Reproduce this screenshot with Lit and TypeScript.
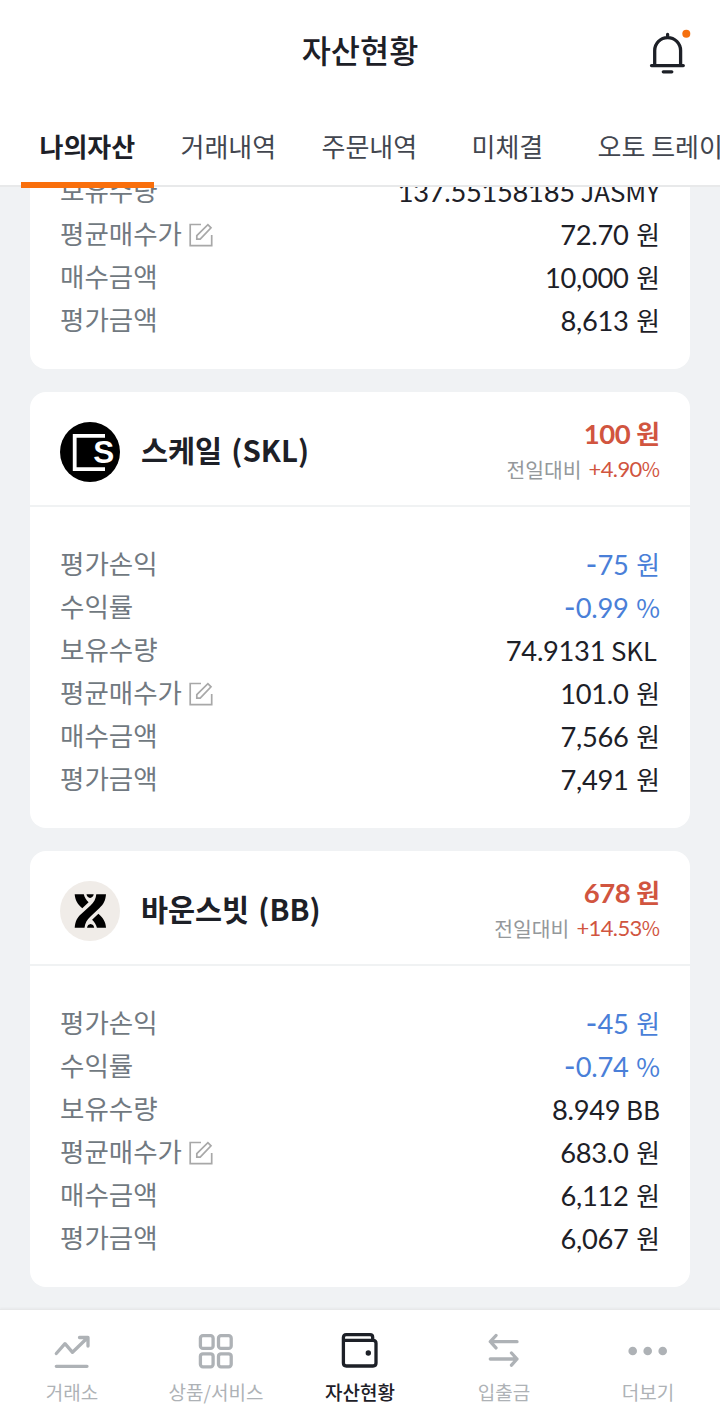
import { LitElement, html, css, svg } from "lit";
import { customElement, property } from "lit/decorators.js";

type Row = { label: string; value: string; edit?: boolean; down?: boolean; inset?: boolean };
type Asset = { name: string; logo: string; price: string; change: string; rows: Row[] };

const ASSETS: Asset[] = [
  {
    name: "스케일 (SKL)", logo: "skl", price: "100 원", change: "+4.90%",
    rows: [
      { label: "평가손익", value: "-75 원", down: true },
      { label: "수익률", value: "-0.99 %", down: true },
      { label: "보유수량", value: "74.9131 SKL", inset: true },
      { label: "평균매수가", value: "101.0 원", edit: true },
      { label: "매수금액", value: "7,566 원" },
      { label: "평가금액", value: "7,491 원" },
    ],
  },
  {
    name: "바운스빗 (BB)", logo: "bb", price: "678 원", change: "+14.53%",
    rows: [
      { label: "평가손익", value: "-45 원", down: true },
      { label: "수익률", value: "-0.74 %", down: true },
      { label: "보유수량", value: "8.949 BB" },
      { label: "평균매수가", value: "683.0 원", edit: true },
      { label: "매수금액", value: "6,112 원" },
      { label: "평가금액", value: "6,067 원" },
    ],
  },
];

const JASMY: Row[] = [
  { label: "보유수량", value: "137.55158185 JASMY" },
  { label: "평균매수가", value: "72.70 원", edit: true },
  { label: "매수금액", value: "10,000 원" },
  { label: "평가금액", value: "8,613 원" },
];

/* Numerals are set in Lato, units in the Korean family; the minus sign is a little wider. */
const figures = (text: string) =>
  (text.match(/-|[\d.,+]+|[^\d.,+-]+/g) ?? []).map((part) =>
    part === "-" ? html`<span class="minus">-</span>`
      : /\d/.test(part) ? html`<span class="num">${part}</span>` : part);

const LOGOS: Record<string, unknown> = {
  skl: svg`<circle cx="30" cy="30" r="30" fill="#000"/>
    <path d="M45 13.900H14.700V47.100H45" fill="none" stroke="#fff" stroke-width="3.800"/>
    <text x="33.200" y="41.300" font-family="Liberation Sans" font-weight="700" font-size="31" fill="#fff" textLength="21" lengthAdjust="spacingAndGlyphs">S</text>`,
  bb: svg`<circle cx="30" cy="30" r="30" fill="#f0ece8"/>
    <path d="M36.300 13.300H46C45.500 19.500 43.500 23.500 39.500 27L30.500 35.500C27 38.800 25 42 24.500 46.700H14.700C15.200 40.500 17.200 36.500 21.200 33L30.500 24.500C34 21.200 35.800 18 36.300 13.300Z"/>
    <path d="M14.700 13.300H23.800C24.500 16.500 26.200 19 28.600 21.300L22.300 27.200C17.800 23.500 15 19 14.700 13.300Z"/>
    <path d="M46 46.700H36.900C36.200 43.500 34.500 41 32.100 38.700L38.400 32.800C42.900 36.500 45.700 41 46 46.700Z"/>
    <path d="M26.500 13.300H33.700Q33.100 16.600 30.100 17Q27.100 16.600 26.500 13.300Z"/>
    <path d="M27 46.700H34.200Q33.600 43.400 30.600 43Q27.600 43.400 27 46.700Z"/>`,
};

@customElement("info-row")
class InfoRow extends LitElement {
  @property({ attribute: false }) row!: Row;
  static styles = css`
    :host { display: flex; justify-content: space-between; align-items: center; height: 43px; }
    .label { display: flex; align-items: center; font-size: 26.5px; line-height: 43px; color: #717981; }
    .edit { width: 24px; height: 24px; margin: 4px 0 0 7.5px; }
    .value { padding-top: 2px; font-size: 25.8px; line-height: 43px; color: #1d2027; white-space: pre; }
    .num { font-family: Lato, sans-serif; font-size: 27.3px; letter-spacing: -0.3px; }
    .minus { position: relative; top: 1px; font-family: Lato, sans-serif; font-size: 32px; line-height: 0; }
    .down { color: #4a7fd8; }
    .won { word-spacing: 2px; }
    .inset { margin-right: 3px; }
  `;
  render() {
    const r = this.row;
    return html`<span class="label">${r.label}${r.edit
        ? html`<svg class="edit" viewBox="0 0 24 24" fill="none" stroke="#a8a8a8" stroke-width="1.700"><path d="M12 1.500H1.200V22.700H22.700V12"/><path d="M7.800 16.200V12.600L18.900 1.700L22 4.800L11.200 16.200Z"/></svg>`
        : ""}</span>
      <span class="value ${r.down ? "down" : ""} ${r.inset ? "inset" : ""} ${/[원%]$/.test(r.value) ? "won" : ""}">${figures(r.value)}</span>`;
  }
}

@customElement("asset-card")
class AssetCard extends LitElement {
  @property({ attribute: false }) asset!: Asset;
  static styles = css`
    :host { display: block; box-sizing: border-box; height: 436px; background: #fff; border-radius: 16px; }
    .head { box-sizing: border-box; display: flex; align-items: center; height: 115px; padding: 8px 30px 1px; border-bottom: 2px solid #f0f2f3; }
    .logo { width: 60px; height: 60px; margin-right: 21px; }
    .name { flex: 1; padding-bottom: 7px; font-size: 29.4px; font-weight: 700; word-spacing: 2.5px; color: #1d2027; }
    .quote { display: flex; flex-direction: column; align-items: flex-end; padding-bottom: 4px; color: #d1553f; }
    .price { font-size: 25.8px; line-height: 36px; font-weight: 700; }
    .price .num { font-family: Lato, sans-serif; font-size: 27.5px; letter-spacing: -0.4px; }
    .change { display: flex; gap: 7px; font-size: 20.4px; line-height: 34px; }
    .change .num { font-family: Lato, sans-serif; font-size: 22px; letter-spacing: -0.6px; }
    .rate { font-size: 19.8px; }
    .since { color: #94989b; }
    .body { padding: 34px 30px 0; }
  `;
  render() {
    const a = this.asset;
    return html`<div class="head">
        <svg class="logo" viewBox="0 0 60 60">${LOGOS[a.logo]}</svg>
        <span class="name">${a.name}</span>
        <div class="quote"><span class="price">${figures(a.price)}</span>
          <div class="change"><span class="since">전일대비</span><span class="rate">${figures(a.change)}</span></div></div>
      </div>
      <div class="body">${a.rows.map((r) => html`<info-row .row=${r}></info-row>`)}</div>`;
  }
}

const NAV = [
  { label: "거래소", icon: svg`<path d="M2.300 20.500L11 10.700L18.500 19.300L33.500 4.800M25.500 4.500H34V13M2.300 33.300H33"/>` },
  { label: "상품/서비스", icon: svg`<rect x="2.400" y="2.700" width="12.700" height="12.700" rx="2.500"/><rect x="20.500" y="2.700" width="12.700" height="12.700" rx="2.500"/><rect x="2.400" y="20.800" width="12.700" height="13" rx="2.500"/><rect x="20.500" y="20.800" width="12.700" height="13" rx="2.500"/>` },
  { label: "자산현황", icon: svg`<path d="M30.700 7V4.500Q30.700 1.700 28 1.700H4.200Q1.400 1.700 1.400 4.500V30Q1.400 33 4.400 33H31Q34 33 34 30V10.300Q34 7.300 31 7.300H2"/><circle cx="26.300" cy="20" r="2.700" fill="currentColor" stroke="none"/>` },
  { label: "입출금", icon: svg`<path d="M31 8.700H4.500M10 2.500L4.300 8.700L10 14.900M4.300 26H31M25.500 20L31 26L25.500 32.200"/>` },
  { label: "더보기", icon: svg`<g fill="currentColor" stroke="none"><circle cx="2.700" cy="18" r="4.300"/><circle cx="17.700" cy="18" r="4.300"/><circle cx="32.700" cy="18" r="4.300"/></g>` },
];

@customElement("app-root")
class AppRoot extends LitElement {
  static styles = css`
    :host { display: flex; flex-direction: column; height: 1419px; width: 720px; overflow: hidden; background: #f0f2f4; font-family: "Noto Sans CJK KR", sans-serif; }
    .top { flex: none; height: 187px; background: #fff; box-sizing: border-box; border-bottom: 2px solid #e8e9ea; }
    .bar { display: grid; grid-template-columns: 1fr auto 1fr; align-items: center; height: 108px; }
    .title { grid-column: 2; padding-bottom: 10px; font-size: 31.7px; font-weight: 500; color: #1d2027; }
    .bell { justify-self: end; width: 48px; height: 52px; margin-right: 26px; }
    .tabs { display: flex; height: 79px; padding-left: 20.5px; overflow: hidden; }
    .tab { flex: none; box-sizing: border-box; height: 79px; font-size: 26px; line-height: 76px; color: #42464f; white-space: nowrap; }
    .tab.on { font-weight: 700; color: #1d2027; }
    .marker { height: 6px; width: 133px; margin: -5px 0 0 21px; background: #f96f0c; position: relative; }
    .main { flex: 1; min-height: 0; overflow: hidden; display: flex; flex-direction: column; gap: 23px; padding: 0 30px; }
    .first { flex: none; box-sizing: border-box; height: 202px; padding: 1px 30px 0; margin-top: -20px; background: #fff; border-radius: 0 0 16px 16px; }
    .nav { flex: none; box-sizing: border-box; height: 110px; background: #fff; border-top: 1px solid #e7e8e9; box-shadow: 0 -1px 2px #0000000a; display: grid; grid-template-columns: repeat(5, 1fr); position: relative; }
    .item { display: flex; flex-direction: column; align-items: center; padding-top: 23px; color: #aeb2b6; font-size: 19px; line-height: 28px; }
    .item.on { color: #1d2027; font-weight: 500; }
    .icon { width: 36px; height: 36px; margin-bottom: 9px; overflow: visible; fill: none; stroke: currentColor; stroke-width: 3.3; stroke-linecap: round; stroke-linejoin: round; }
    .asset { flex: none; }
    .t0 { padding-left: 19px; width: 160px; } .t1 { width: 141px; } .t2 { width: 150px; } .t3 { width: 126px; }
  `;
  render() {
    return html`
      <header class="top">
        <div class="bar"><span></span><span class="title">자산현황</span>
          <svg class="bell" viewBox="0 0 48 52" fill="none" stroke="#1d2027" stroke-width="3.300" stroke-linecap="round" stroke-linejoin="round">
            <path d="M8.700 37.500V22.500A12.950 12.950 0 0 1 34.600 22.500V37.500M5.500 37.600H37.300M21.600 9V6.500M17.300 43.800H25.800"/><circle cx="40.300" cy="5.700" r="4" fill="#f5700f" stroke="none"/></svg>
        </div>
        <div class="tabs">${["나의자산", "거래내역", "주문내역", "미체결", "오토 트레이딩"].map((t, i) => html`<span class="tab t${i} ${i === 0 ? "on" : ""}">${t}</span>`)}</div>
        <div class="marker"></div>
      </header>
      <main class="main">
        <section class="first">${JASMY.map((r) => html`<info-row .row=${r}></info-row>`)}</section>
        ${ASSETS.map((a) => html`<asset-card class="asset" .asset=${a}></asset-card>`)}
      </main>
      <nav class="nav">${NAV.map((n, i) => html`<div class="item ${i === 2 ? "on" : ""}"><svg class="icon" viewBox="0 0 36 36">${n.icon}</svg><span>${n.label}</span></div>`)}</nav>`;
  }
}
